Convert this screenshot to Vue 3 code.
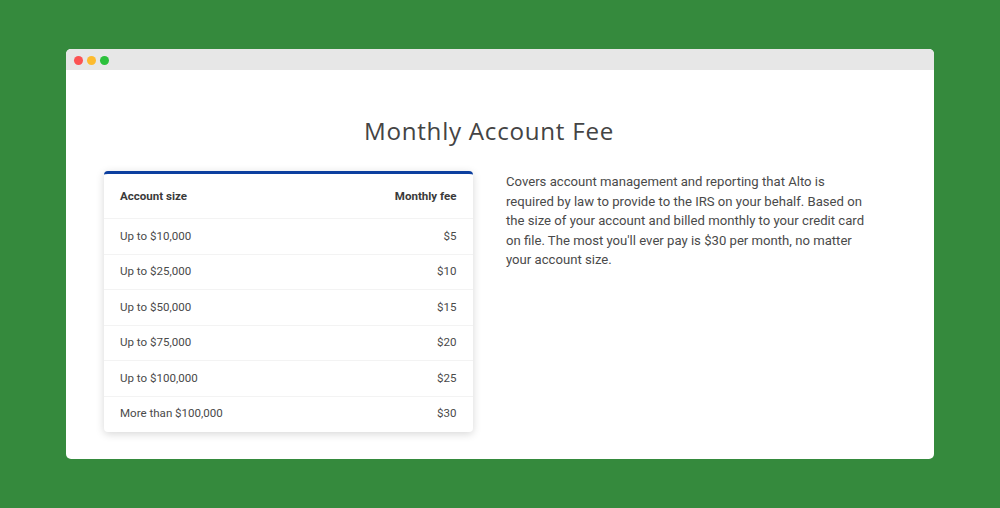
<script setup>
const rows = [
  ['Up to $10,000', '$5'],
  ['Up to $25,000', '$10'],
  ['Up to $50,000', '$15'],
  ['Up to $75,000', '$20'],
  ['Up to $100,000', '$25'],
  ['More than $100,000', '$30'],
]
</script>

<template>
  <div class="page">
    <div class="window">
      <div class="titlebar">
        <span class="dot red"></span>
        <span class="dot yellow"></span>
        <span class="dot green"></span>
      </div>
      <div class="content">
        <h1 class="title">Monthly Account Fee</h1>
        <div class="columns">
          <div class="card">
            <div class="row head">
              <span>Account size</span>
              <span>Monthly fee</span>
            </div>
            <div v-for="r in rows" :key="r[0]" class="row">
              <span>{{ r[0] }}</span>
              <span>{{ r[1] }}</span>
            </div>
          </div>
          <p class="copy">
            Covers account management and reporting that Alto is<br />
            required by law to provide to the IRS on your behalf. Based on<br />
            the size of your account and billed monthly to your credit card<br />
            on file. The most you'll ever pay is $30 per month, no matter<br />
            your account size.
          </p>
        </div>
      </div>
    </div>
  </div>
</template>

<style>
html, body { margin: 0; background: #358a3d; }
</style>

<style scoped>
.page {
  width: 1000px;
  height: 508px;
  box-sizing: border-box;
  padding: 49px 66px;
  background: #358a3d;
  overflow: hidden;
}
.window {
  height: 410px;
  background: #fff;
  border-radius: 5px;
  overflow: hidden;
}
.titlebar {
  height: 21px;
  box-sizing: border-box;
  padding: 1px 0 0 8px;
  background: #e7e7e7;
  display: flex;
  align-items: center;
  gap: 4px;
}
.dot { width: 9px; height: 9px; border-radius: 50%; }
.red { background: #fc5353; }
.yellow { background: #fdbb2f; }
.green { background: #2cc13c; }
.content { padding: 0 38px; }
.title {
  margin: 0;
  padding: 44px 22px 0 0;
  text-align: center;
  font: 400 24.2px/34px "Open Sans", sans-serif;
  letter-spacing: 0.72px;
  color: #444;
}
.columns {
  display: flex;
  gap: 32px;
  margin-top: 23px;
  align-items: flex-start;
}
.card {
  width: 369px;
  height: 261px;
  box-sizing: border-box;
  flex: none;
  border-top: 3px solid #0c3f9f;
  border-radius: 4px;
  background: #fff;
  box-shadow: 0 2px 8px rgba(0, 0, 0, 0.16);
  font: 400 11.55px/16px Roboto, sans-serif;
  color: #4a4a4a;
}
.row {
  height: 35.5px;
  box-sizing: border-box;
  padding: 0 16.5px 1px 16px;
  display: flex;
  align-items: center;
  justify-content: space-between;
  border-top: 1px solid #f3f3f3;
}
.head {
  height: 44px;
  border-top: 0;
  font-weight: 700;
  color: #3a3a3a;
}
.copy {
  margin: 0;
  padding: 1px 0 0 1px;
  font: 400 13.13px/19.6px Roboto, sans-serif;
  color: #4a4a4a;
  white-space: nowrap;
}
</style>
